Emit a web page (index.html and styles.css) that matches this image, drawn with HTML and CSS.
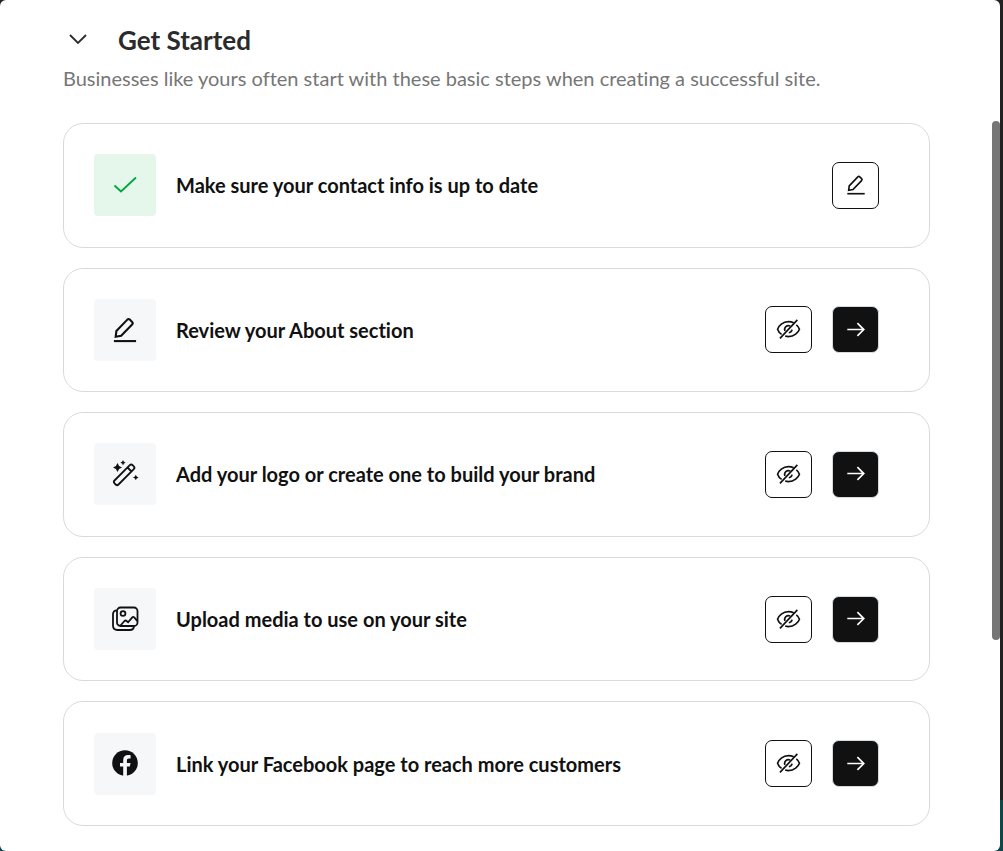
FILE: index.html
```html
<!DOCTYPE html>
<html lang="en">
<head>
  <meta charset="UTF-8">
  <meta name="viewport" content="width=device-width, initial-scale=1.0">
  <title>Get Started</title>
  <link rel="stylesheet" href="styles.css">
</head>
<body>
  <!-- Shared icons -->
  <svg class="icon-defs" aria-hidden="true">
    <symbol id="icon-edit" viewBox="0 0 24 24">
      <path d="M4 17.800 4.600 12.900 14 3.100a1.500 1.500 0 0 1 2.100 0l2 2a1.500 1.500 0 0 1 0 2.100L8.700 16.900z"/>
      <path d="M2.500 21.500h19"/>
    </symbol>
    <symbol id="icon-hide" viewBox="0 0 24 24">
      <path d="M17 5.600C15.500 4.900 13.800 4.500 12 4.500 6.500 4.500 2.600 8.500 1.500 11.700c.6 1.900 2 3.700 3.900 5M8.800 18.300c1 .3 2.100.5 3.200.5 5.500 0 9.400-3.900 10.500-7.100-.5-1.500-1.500-3-3-4.200"/>
      <path d="M13.600 8.700a3.600 3.600 0 0 0-5 4.600"/>
      <path d="M12.300 15.100a3.500 3.500 0 0 0 3.100-2.900"/>
      <path d="M20.500 2.800 3.800 20.500"/>
    </symbol>
    <symbol id="icon-arrow" viewBox="0 0 24 24">
      <path d="M2.500 11.500h18M13.500 4.500l7 7-7 7"/>
    </symbol>
  </svg>

  <main class="panel">
    <header class="panel-header">
      <button class="toggle" aria-label="Collapse Get Started" aria-expanded="true">
        <svg viewBox="0 0 20 12"><path d="M2 2l8 8 8-8"/></svg>
      </button>
      <h1>Get Started</h1>
    </header>
    <p class="intro">Businesses like yours often start with these basic steps when creating a successful site.</p>

    <ul class="steps">
      <li class="step">
        <span class="tile tile--done">
          <svg class="icon" viewBox="0 0 28 28"><path d="M3.500 14.500l6.500 6L25 6.500"/></svg>
        </span>
        <h2>Make sure your contact info is up to date</h2>
        <button class="btn" aria-label="Edit"><svg><use href="#icon-edit"/></svg></button>
      </li>

      <li class="step">
        <span class="tile">
          <svg class="icon"><use href="#icon-edit"/></svg>
        </span>
        <h2>Review your About section</h2>
        <button class="btn" aria-label="Hide step"><svg class="eye"><use href="#icon-hide"/></svg></button>
        <button class="btn btn--go" aria-label="Start step"><svg><use href="#icon-arrow"/></svg></button>
      </li>

      <li class="step">
        <span class="tile">
          <svg class="icon" viewBox="0 0 28 28">
            <path d="M3.500 20.500 18.800 5.200a2 2 0 0 1 2.800 0l1.200 1.200a2 2 0 0 1 0 2.800L7.500 24.500a2 2 0 0 1-2.800 0l-1.200-1.200a2 2 0 0 1 0-2.800zM16.500 7.500l4 4"/>
            <path class="spark" d="M6.500 3l1.600 2.900L11 7.500 8.100 9.100 6.500 12 4.900 9.100 2 7.500l2.900-1.600zM12 0l.9 1.800 1.800.9-1.800.9-.9 1.800-.9-1.800-1.800-.9 1.800-.9zM24.800 14.700l.9 1.900 1.900.9-1.900.9-.9 1.900-.9-1.900-1.900-.9 1.900-.9z"/>
          </svg>
        </span>
        <h2>Add your logo or create one to build your brand</h2>
        <button class="btn" aria-label="Hide step"><svg class="eye"><use href="#icon-hide"/></svg></button>
        <button class="btn btn--go" aria-label="Start step"><svg><use href="#icon-arrow"/></svg></button>
      </li>

      <li class="step">
        <span class="tile">
          <svg class="icon" viewBox="0 0 28 28">
            <rect x="6" y="2.500" width="20.500" height="18.500" rx="3.500"/>
            <path d="M5.800 5.300C3.500 5.300 2 6.700 2 9v11.500C2 23.500 3.500 25 6.500 25H19c2.200 0 3.600-1 4-3.500"/>
            <circle cx="12" cy="8.500" r="2.400"/>
            <path d="M9.500 20.500l4-4.500c.7-.7 1.400-.7 2.100 0l1.500 1.300 4.200-5c.6-.7 1.300-.7 1.900 0l3 3.600"/>
          </svg>
        </span>
        <h2>Upload media to use on your site</h2>
        <button class="btn" aria-label="Hide step"><svg class="eye"><use href="#icon-hide"/></svg></button>
        <button class="btn btn--go" aria-label="Start step"><svg><use href="#icon-arrow"/></svg></button>
      </li>

      <li class="step">
        <span class="tile">
          <svg class="icon facebook" viewBox="0 0 28 28">
            <circle cx="14" cy="13" r="12.800"/>
            <path d="M12.200 26.500V16.500H9v-3.600h3.200v-2.700c0-3.400 1.900-5.100 4.900-5.100 1 0 1.900.1 2.500.2v3.100h-1.700c-1.500 0-2 .8-2 1.900v2.600h3.600l-.6 3.600h-3v10z"/>
          </svg>
        </span>
        <h2>Link your Facebook page to reach more customers</h2>
        <button class="btn" aria-label="Hide step"><svg class="eye"><use href="#icon-hide"/></svg></button>
        <button class="btn btn--go" aria-label="Start step"><svg><use href="#icon-arrow"/></svg></button>
      </li>
    </ul>

    <div class="scroll-thumb"></div>
  </main>
</body>
</html>
```
FILE: styles.css
```css
* {
  box-sizing: border-box;
}

body {
  margin: 0;
  padding-right: 3px;
  font-family: Lato, "Open Sans", sans-serif;
  font-variant-ligatures: none;
  color: #111111;
  background: linear-gradient(#222222 94%, #0f464a 94%); /* Page behind the panel */
}

.icon-defs {
  display: none;
}

.panel {
  position: relative;
  display: flex;
  flex-direction: column;
  min-height: 100vh;
  padding: 24px 70px 25px 63px;
  background-color: #ffffff;
  border-radius: 6px;
}

.panel-header {
  display: flex;
  align-items: center;
  gap: 25px;
  height: 32px;
}

.panel-header h1 {
  margin: 0;
  font-size: 26px;
  font-weight: 700;
  line-height: 32px;
  color: #2b2b2b;
}

.toggle {
  width: 30px;
  height: 30px;
  padding: 0;
  border: none;
  color: #2b2b2b;
  background: none;
  cursor: pointer;
}

.toggle svg {
  width: 20px;
  height: 12px;
}

svg {
  fill: none;
  stroke: currentColor;
  stroke-width: 1.8;
}

.intro {
  margin: 9px 0 31px;
  font-size: 20px;
  line-height: 27px;
  color: #767676;
}

.steps {
  flex: 1;
  display: grid;
  grid-auto-rows: 1fr;
  gap: 20px;
  margin: 0;
  padding: 0;
  list-style: none;
}

.step {
  display: flex;
  align-items: center;
  gap: 20px;
  padding: 30px 50px 30px 30px;
  border: 1px solid #d4dbe0;
  border-radius: 20px;
}

.step h2 {
  flex: 1;
  margin: 0;
  font-size: 20px;
  font-weight: 700;
  line-height: 28px;
}

.tile {
  display: flex;
  align-items: center;
  justify-content: center;
  width: 62px;
  height: 62px;
  border-radius: 4px;
  background-color: #f5f7f8;
}

.tile--done {
  color: #00a63f;
  background-color: #e5f6eb;
}

.icon {
  width: 28px;
  height: 28px;
}

.spark {
  fill: currentColor;
  stroke: none;
}

.facebook {
  fill: #111111;
  stroke: none;
}

.facebook path {
  fill: #f5f7f8;
}

.btn {
  display: flex;
  align-items: center;
  justify-content: center;
  width: 47px;
  height: 47px;
  padding: 0;
  border: 1px solid #111111;
  border-radius: 7px;
  color: #111111;
  background-color: #ffffff;
  cursor: pointer;
}

.btn svg {
  width: 22px;
  height: 22px;
}

.btn .eye {
  width: 25px;
  height: 25px;
  stroke-width: 1.6;
}

.btn--go {
  border-color: #d4dbe0;
  color: #ffffff;
  background-color: #111111;
}

/* Scroll position marker at the panel edge */
.scroll-thumb {
  position: absolute;
  top: 121px;
  right: 0;
  width: 8px;
  height: 61%;
  border-radius: 4px;
  background-color: #767676;
}
```
